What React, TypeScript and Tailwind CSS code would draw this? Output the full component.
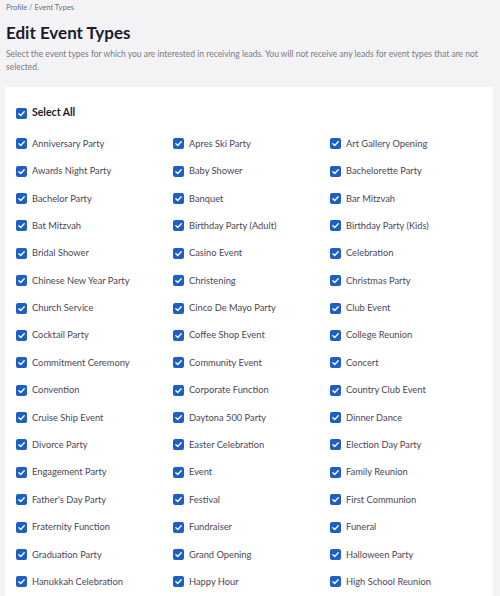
import React from 'react';

const eventTypes: string[] = [
  'Anniversary Party', 'Apres Ski Party', 'Art Gallery Opening',
  'Awards Night Party', 'Baby Shower', 'Bachelorette Party',
  'Bachelor Party', 'Banquet', 'Bar Mitzvah',
  'Bat Mitzvah', 'Birthday Party (Adult)', 'Birthday Party (Kids)',
  'Bridal Shower', 'Casino Event', 'Celebration',
  'Chinese New Year Party', 'Christening', 'Christmas Party',
  'Church Service', 'Cinco De Mayo Party', 'Club Event',
  'Cocktail Party', 'Coffee Shop Event', 'College Reunion',
  'Commitment Ceremony', 'Community Event', 'Concert',
  'Convention', 'Corporate Function', 'Country Club Event',
  'Cruise Ship Event', 'Daytona 500 Party', 'Dinner Dance',
  'Divorce Party', 'Easter Celebration', 'Election Day Party',
  'Engagement Party', 'Event', 'Family Reunion',
  "Father's Day Party", 'Festival', 'First Communion',
  'Fraternity Function', 'Fundraiser', 'Funeral',
  'Graduation Party', 'Grand Opening', 'Halloween Party',
  'Hanukkah Celebration', 'Happy Hour', 'High School Reunion',
];

const Check = () => (
  <span className="w-[11px] h-[11px] rounded-[2px] bg-[#1d5fc4] flex items-center justify-center shrink-0">
    <svg width="9" height="9" viewBox="0 0 12 12" fill="none">
      <path d="M2.5 6.3 L5 8.6 L9.6 3.6" stroke="white" strokeWidth="1.8" strokeLinecap="round" strokeLinejoin="round" />
    </svg>
  </span>
);

export default function App() {
  return (
    <div className="bg-[#f3f3f5] min-h-screen pl-[5px] pr-[7px] pt-[2px]" style={{ fontFamily: 'Lato, "Open Sans", sans-serif' }}>
      {/* Breadcrumb */}
      <div className="text-[7.5px] leading-[12px] pl-[1px]">
        <span className="text-[#5b6ea8]">Profile</span>
        <span className="text-[#6b6b78]"> / Event Types</span>
      </div>

      {/* Header */}
      <h1 className="mt-[7px] pl-[1px] text-[17px] leading-[24px] font-bold text-[#1b1b2e]">Edit Event Types</h1>
      <p className="mt-[3px] pl-[1px] text-[8.5px] leading-[13px] text-[#7a7a84]">
        Select the event types for which you are interested in receiving leads. You will not receive any leads for event types that are not selected.
      </p>

      {/* Card */}
      <div className="mt-[13px] bg-white pl-[11px] pt-[20px] pb-[12px]">
        <label className="flex items-center gap-[5px] h-[12px]">
          <Check />
          <span className="text-[10.5px] font-bold text-[#1b1b2e]">Select All</span>
        </label>

        <div className="grid grid-cols-[157px_157px_157px] mt-[11px]">
          {eventTypes.map((name) => (
            <label key={name} className="flex items-center gap-[5px] h-[27.4px]">
              <Check />
              <span className="text-[9.3px] text-[#4b4658] whitespace-nowrap">{name}</span>
            </label>
          ))}
        </div>
      </div>
    </div>
  );
}
